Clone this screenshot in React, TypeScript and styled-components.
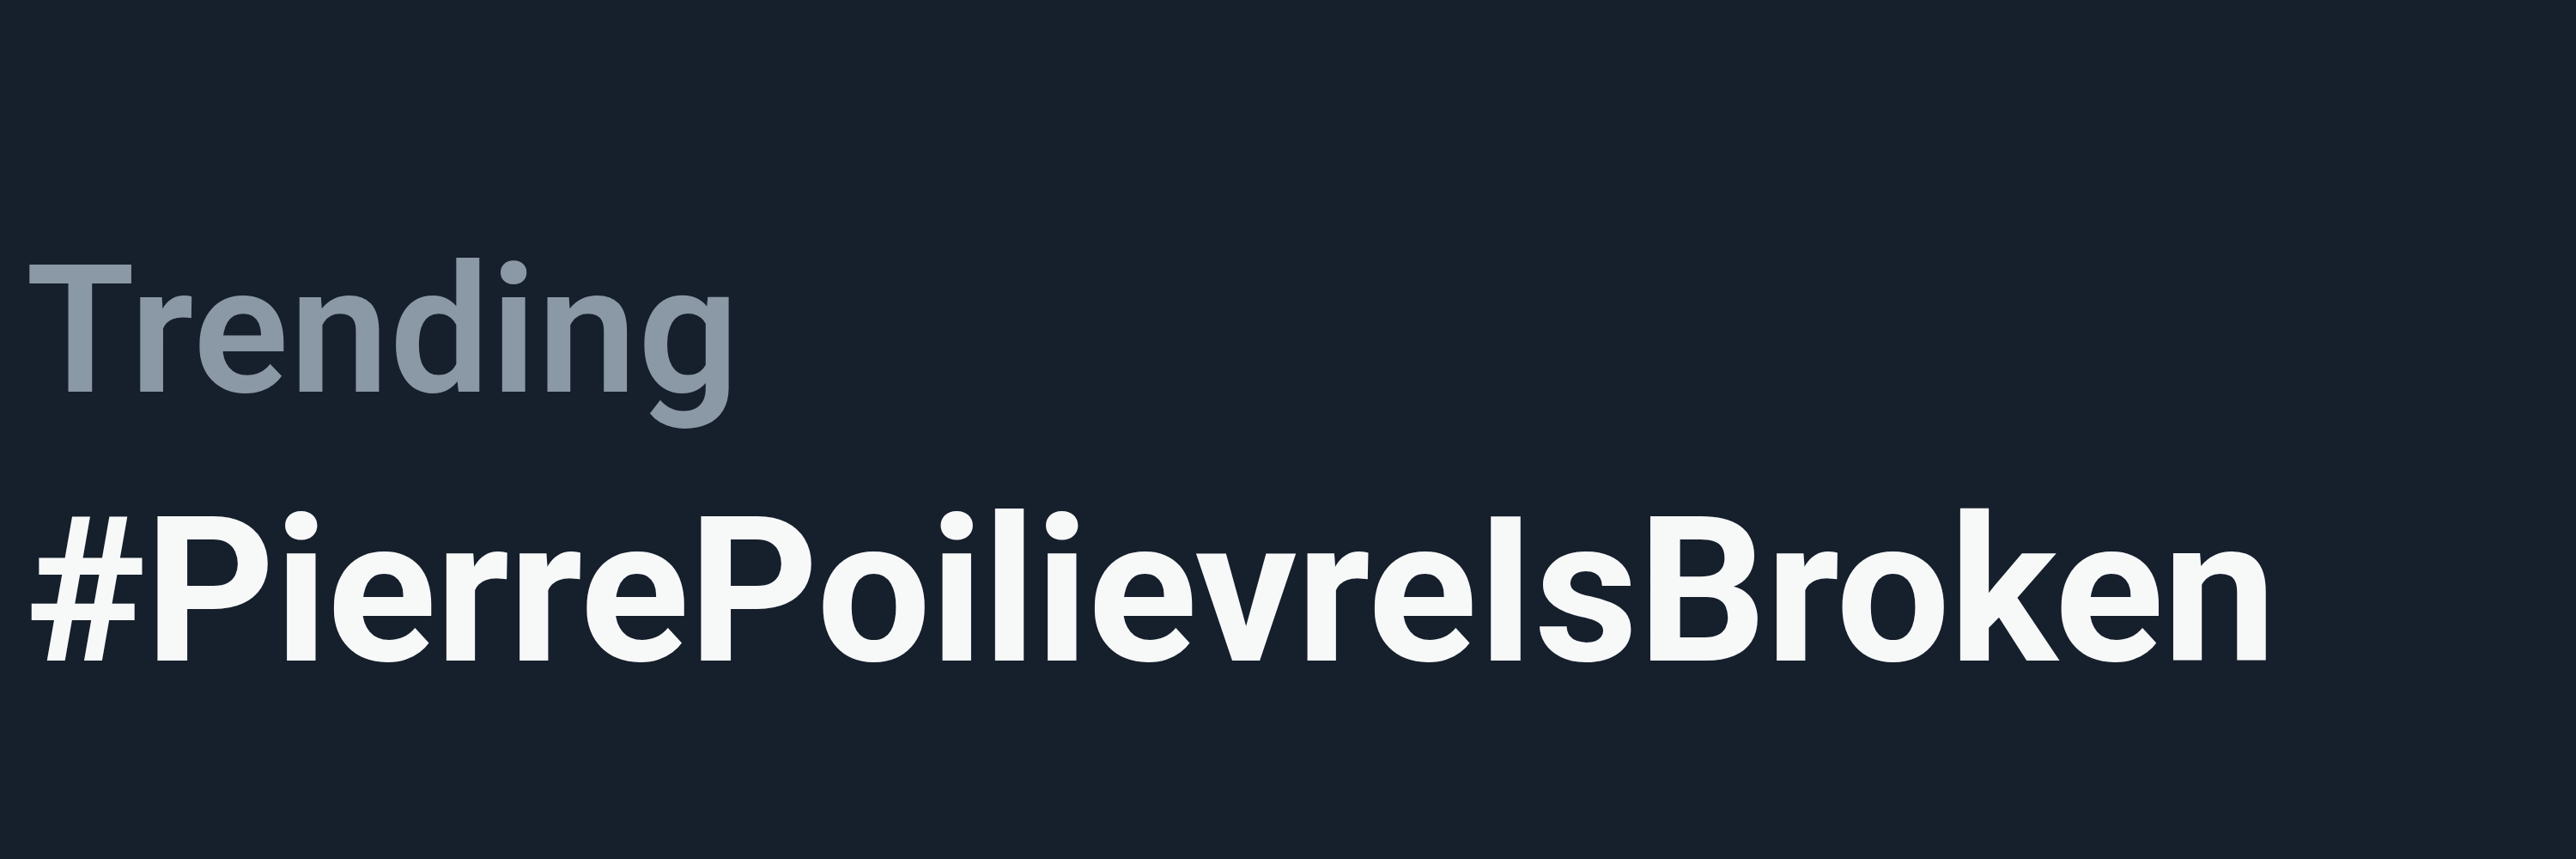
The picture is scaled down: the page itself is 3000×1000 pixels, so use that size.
import React from "react";
import styled, { createGlobalStyle } from "styled-components";

const Global = createGlobalStyle`
  html, body { margin: 0; padding: 0; background: #15202b; }
  #root { width: 3000px; height: 1000px; }
`;

const Card = styled.div`
  box-sizing: border-box;
  width: 3000px;
  height: 1000px;
  background: #161f2c;
  padding: 266px 0 0 30px;
  display: flex;
  flex-direction: column;
  gap: 48px;
  font-family: Roboto, "Liberation Sans", sans-serif;
`;

const Label = styled.div`
  color: #8b98a5;
  font-size: 207px;
  line-height: 240px;
  font-weight: 600;
  letter-spacing: 1px;
  white-space: nowrap;
`;

const Hashtag = styled.div`
  color: #f7f9f9;
  font-size: 236px;
  line-height: 270px;
  font-weight: 700;
  letter-spacing: -1.2px;
  white-space: nowrap;
`;

export default function App() {
  return (
    <>
      <Global />
      <Card>
        <Label>Trending</Label>
        <Hashtag>#PierrePoilievreIsBroken</Hashtag>
      </Card>
    </>
  );
}
